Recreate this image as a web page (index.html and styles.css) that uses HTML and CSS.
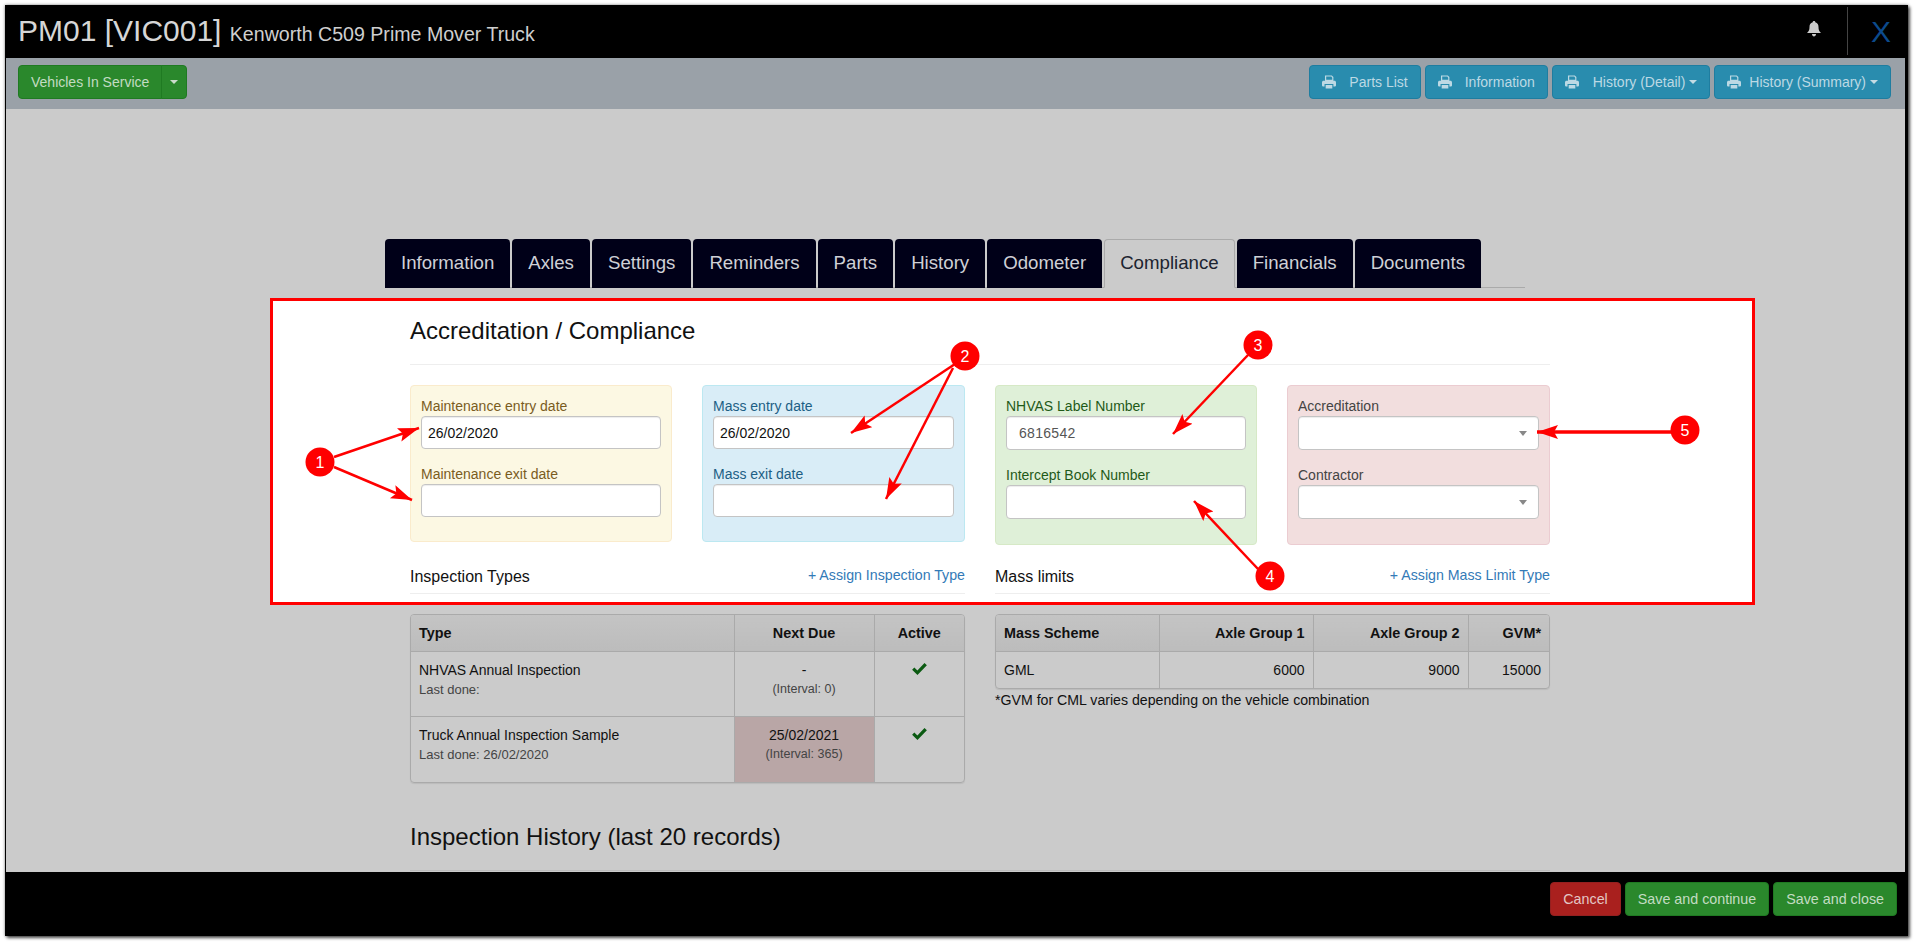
FILE: index.html
```html
<!DOCTYPE html>
<html lang="en">
<head>
<meta charset="utf-8">
<title>PM01 Compliance</title>
<link rel="stylesheet" href="styles.css">
</head>
<body>
<svg class="defs" width="0" height="0" aria-hidden="true">
  <defs>
    <symbol id="printer" viewBox="0 0 16 15">
      <path d="M3.4 0h7.800l1.800 1.800V6H3.400zM4.800 1.300v3.500h6.900V2.600l-1.100-1.300zM0 8c0-1 .8-1.800 1.800-1.800h12.400c1 0 1.800.8 1.800 1.800v3.600c0 .5-.4.9-.9.900h-2.100V9.800H2.900v2.700H.9c-.5 0-.9-.4-.9-.9zM4.200 11h7.600v4H4.200z"/>
    </symbol>
    <symbol id="check" viewBox="0 0 16 13">
      <path d="M0 7.200 2.400 4.800 5.700 8 13.400 0 16 2.500 5.800 13z"/>
    </symbol>
    <marker id="head" markerUnits="userSpaceOnUse" markerWidth="24" markerHeight="16" refX="21" refY="7" orient="auto">
      <path d="M0 0 21 7 0 14 4 7z" fill="#f00"/>
    </marker>
  </defs>
</svg>
<div class="window">
  <header class="topbar">
    <h1 class="title">PM01 [VIC001] <small class="subtitle">Kenworth C509 Prime Mover Truck</small></h1>
    <div class="top-actions">
      <svg class="bell" viewBox="0 0 14 16"><path d="M7 0c.8 0 1.300.5 1.300 1.200C10.600 1.800 11.500 3.600 11.500 6c0 3 .7 4.400 2.500 6H0c1.800-1.600 2.500-3 2.500-6 0-2.400.9-4.200 3.200-4.800C5.700.5 6.200 0 7 0zM5 13h4c0 1.500-.9 2.500-2 2.500S5 14.500 5 13z"/></svg>
      <span class="divider"></span>
      <span class="close">X</span>
    </div>
  </header>
  <div class="toolbar">
    <div class="split">
      <button class="btn green split-main">Vehicles In Service</button>
      <button class="btn green split-caret"><span class="caret"></span></button>
    </div>
    <div class="reports">
      <button class="btn teal"><svg class="print"><use href="#printer"/></svg>Parts List</button>
      <button class="btn teal"><svg class="print"><use href="#printer"/></svg>Information</button>
      <button class="btn teal"><svg class="print mid"><use href="#printer"/></svg>History (Detail)<span class="caret after"></span></button>
      <button class="btn teal"><svg class="print near"><use href="#printer"/></svg>History (Summary)<span class="caret after"></span></button>
    </div>
  </div>
  <main class="content">
    <nav class="tabs">
      <a class="tab">Information</a>
      <a class="tab">Axles</a>
      <a class="tab">Settings</a>
      <a class="tab">Reminders</a>
      <a class="tab">Parts</a>
      <a class="tab">History</a>
      <a class="tab">Odometer</a>
      <a class="tab active">Compliance</a>
      <a class="tab">Financials</a>
      <a class="tab">Documents</a>
    </nav>
    <section class="highlight">
      <h2 class="section-head">Accreditation / Compliance</h2>
      <div class="panels">
        <div class="panel yellow">
          <label class="field">Maintenance entry date<input class="input" value="26/02/2020" readonly></label>
          <label class="field">Maintenance exit date<input class="input" readonly></label>
        </div>
        <div class="panel blue">
          <label class="field">Mass entry date<input class="input" value="26/02/2020" readonly></label>
          <label class="field">Mass exit date<input class="input" readonly></label>
        </div>
        <div class="panel lime tall">
          <label class="field">NHVAS Label Number<input class="input number" value="6816542" readonly></label>
          <label class="field">Intercept Book Number<input class="input" readonly></label>
        </div>
        <div class="panel rose tall">
          <div class="field">Accreditation<div class="input select"><span class="select-arrow"></span></div></div>
          <div class="field">Contractor<div class="input select"><span class="select-arrow"></span></div></div>
        </div>
      </div>
      <div class="split-row">
        <div class="subhead"><h3 class="subhead-title">Inspection Types</h3><a class="assign">+ Assign Inspection Type</a></div>
        <div class="subhead"><h3 class="subhead-title">Mass limits</h3><a class="assign">+ Assign Mass Limit Type</a></div>
      </div>
    </section>
    <div class="lower">
      <div class="split-row">
        <div>
          <div class="table-wrap">
            <table class="grid inspections">
              <thead><tr><th>Type</th><th class="center">Next Due</th><th class="center">Active</th></tr></thead>
              <tbody>
                <tr class="row-a">
                  <td>NHVAS Annual Inspection<div class="done">Last done:</div></td>
                  <td class="center">-<div class="interval">(Interval: 0)</div></td>
                  <td class="center"><svg class="tick"><use href="#check"/></svg></td>
                </tr>
                <tr class="row-b">
                  <td>Truck Annual Inspection Sample<div class="done">Last done: 26/02/2020</div></td>
                  <td class="center overdue">25/02/2021<div class="interval">(Interval: 365)</div></td>
                  <td class="center"><svg class="tick"><use href="#check"/></svg></td>
                </tr>
              </tbody>
            </table>
          </div>
        </div>
        <div>
          <div class="table-wrap">
            <table class="grid mass">
              <thead><tr><th>Mass Scheme</th><th class="right">Axle Group 1</th><th class="right">Axle Group 2</th><th class="right">GVM*</th></tr></thead>
              <tbody>
                <tr class="row-c"><td>GML</td><td class="right">6000</td><td class="right">9000</td><td class="right">15000</td></tr>
              </tbody>
            </table>
          </div>
          <p class="note">*GVM for CML varies depending on the vehicle combination</p>
        </div>
      </div>
      <h2 class="section-head history">Inspection History (last 20 records)</h2>
    </div>
  </main>
  <footer class="footer">
    <button class="btn red">Cancel</button>
    <button class="btn green">Save and continue</button>
    <button class="btn green">Save and close</button>
  </footer>
  <svg class="annotations" viewBox="6 5 1898 931">
    <g class="arrows">
      <line x1="334" y1="457" x2="419" y2="428" marker-end="url(#head)"/>
      <line x1="334" y1="467" x2="412" y2="500" marker-end="url(#head)"/>
      <line x1="955" y1="364" x2="851" y2="433" marker-end="url(#head)"/>
      <line x1="953" y1="368" x2="886" y2="499" marker-end="url(#head)"/>
      <line x1="1248" y1="355" x2="1173" y2="434" marker-end="url(#head)"/>
      <line x1="1258" y1="569" x2="1194" y2="501" marker-end="url(#head)"/>
      <line class="thick" x1="1672" y1="432" x2="1537" y2="432" marker-end="url(#head)"/>
    </g>
    <g class="callouts">
      <circle cx="320" cy="462" r="14.500"/><text x="320" y="468">1</text>
      <circle cx="965" cy="356" r="14.500"/><text x="965" y="362">2</text>
      <circle cx="1258" cy="345" r="14.500"/><text x="1258" y="351">3</text>
      <circle cx="1270" cy="576" r="14.500"/><text x="1270" y="582">4</text>
      <circle cx="1685" cy="430" r="14.500"/><text x="1685" y="436">5</text>
    </g>
  </svg>
</div>
</body>
</html>
```
FILE: styles.css
```css
* { box-sizing: border-box; }
html, body { height: 100%; }
body {
  margin: 0;
  background: #fff;
  overflow: hidden;
  font-family: "Liberation Sans", Arial, sans-serif;
  font-size: 14px;
  line-height: 20px;
  color: #111;
}
.defs { position: absolute; }
.window {
  position: relative;
  margin: 5px;
  width: 1903px;
  height: 931px;
  display: flex;
  flex-direction: column;
  background: #cbcbcb;
  border-left: 1px solid #000;
  border-right: 3px solid #000;
  box-shadow: 2px 2px 3px rgba(0,0,0,.65), 0 0 3px rgba(0,0,0,.45);
}
.topbar {
  flex: 0 0 53px;
  display: flex;
  justify-content: space-between;
  background: #000;
  padding: 0 14px 0 12px;
}
.title {
  margin: 9px 0 0;
  font-size: 30px;
  line-height: 33px;
  font-weight: 400;
  color: #d6d6d6;
}
.subtitle { font-size: 19.6px; color: #cfcfcf; }
.top-actions { display: flex; align-items: flex-start; }
.bell { width: 14px; height: 16px; fill: #ccc; margin-top: 16px; }
.divider { width: 1px; height: 48px; background: #444; margin: 2px 23px 0 26px; }
.close { font-size: 30px; line-height: 33px; margin-top: 10px; color: #0c4a8c; }
.toolbar {
  flex: 0 0 51px;
  display: flex;
  justify-content: space-between;
  align-items: flex-start;
  background: #9aa1a8;
  padding: 7px 14px 0 12px;
}
.btn {
  height: 34px;
  padding: 0 12px;
  border: 1px solid transparent;
  border-radius: 4px;
  font: 14px/20px "Liberation Sans", Arial, sans-serif;
  display: inline-flex;
  align-items: center;
}
.green { background: #2a882c; border-color: #1f7a22; color: #c3dcc3; }
.red { background: #a9201e; border-color: #952020; color: #e3c6c5; }
.teal { background: #298cae; border-color: #1f7da0; color: #bcd9e4; }
.split { display: flex; }
.split-main { border-radius: 4px 0 0 4px; }
.split-caret { width: 26px; justify-content: center; padding: 0; margin-left: -1px; border-radius: 0 4px 4px 0; }
.caret {
  width: 0;
  height: 0;
  border-top: 4px solid #cbdccb;
  border-left: 4px solid transparent;
  border-right: 4px solid transparent;
}
.after { margin-left: 4px; border-top-color: #c4dbe4; }
.reports { display: flex; gap: 4px; }
.print { width: 14px; height: 14px; fill: #bcd9e4; margin-right: 13px; }
.print.mid { margin-right: 14px; }
.print.near { margin-right: 8px; }
.content {
  flex: 1;
  min-height: 0;
  overflow: hidden;
  padding-top: 130px;
  background: #cbcbcb;
}
.tabs {
  display: flex;
  gap: 2px;
  width: 1140px;
  height: 49px;
  margin-left: 379px;
  border-bottom: 1px solid #aaa;
}
.tab {
  height: 49px;
  padding: 13px 16px 0;
  background: #000018;
  border-radius: 4px 4px 0 0;
  color: #cfd0d6;
  font-size: 18.67px;
  line-height: 22px;
}
.tab.active {
  background: #cbcbcb;
  border: 1px solid #aaa;
  border-bottom-color: #cbcbcb;
  padding: 12px 15px 0;
  color: #1c2430;
}
.highlight {
  width: 1485px;
  height: 307px;
  margin: 10px 0 0 264px;
  border: 3px solid #f00;
  background: #fff;
  padding: 16px 202px 0 137px;
}
.section-head {
  margin: 0;
  padding-bottom: 19px;
  border-bottom: 1px solid #eee;
  font-size: 24px;
  line-height: 28px;
  font-weight: 400;
  color: #111;
}
.panels {
  display: grid;
  grid-template-columns: 262px 263px 262px 263px;
  gap: 30px;
  align-items: start;
  margin-top: 20px;
}
.panel {
  border: 1px solid;
  border-radius: 4px;
  padding: 10px 10px 9px;
}
.panel.tall { padding-bottom: 10px; }
.yellow { background: #fcf8e3; border-color: #faebcc; color: #7a5c1e; }
.blue { background: #d9edf7; border-color: #bce8f1; color: #1d5f85; }
.lime { background: #dff0d8; border-color: #d6e9c6; color: #1f5a18; }
.rose { background: #f2dede; border-color: #ebccd1; color: #444; }
.field { display: block; margin-bottom: 15px; font-weight: 400; }
.input {
  display: block;
  width: 100%;
  height: 33px;
  padding: 0 6px;
  border: 1px solid #c4c4c4;
  border-radius: 4px;
  background: #fff;
  box-shadow: inset 0 1px 1px rgba(0,0,0,.075);
  font: 14px/20px "Liberation Sans", Arial, sans-serif;
  color: #111;
  outline: none;
}
.tall .input { height: 34px; }
.number { padding-left: 12px; color: #555; letter-spacing: .3px; }
.select { display: flex; align-items: center; justify-content: flex-end; padding-right: 11px; }
.select-arrow {
  border-top: 5px solid #888;
  border-left: 4px solid transparent;
  border-right: 4px solid transparent;
}
.split-row {
  display: grid;
  grid-template-columns: 555px 555px;
  gap: 30px;
}
.highlight .split-row { margin-top: 20px; }
.subhead {
  display: flex;
  justify-content: space-between;
  align-items: flex-start;
  height: 29px;
  border-bottom: 1px solid #eee;
}
.subhead-title { margin: 1px 0 0; font-size: 16px; line-height: 22px; font-weight: 400; }
.assign { color: #337ab7; line-height: 20px; font-size: 14.2px; }
.lower { margin: 9px 0 0 404px; width: 1140px; }
.table-wrap {
  border: 1px solid #aaa;
  border-radius: 4px;
  overflow: hidden;
  box-shadow: 0 1px 1px rgba(0,0,0,.08);
}
.grid {
  width: 100%;
  border-collapse: collapse;
  table-layout: fixed;
  font-size: 14px;
}
.grid th, .grid td {
  border: 1px solid #aaa;
  padding: 8px;
  vertical-align: top;
  text-align: left;
  font-weight: 400;
  color: #111;
}
.grid tr > :first-child { border-left: 0; }
.grid tr > :last-child { border-right: 0; }
.grid thead th { border-top: 0; font-size: 14.4px; font-weight: 700; height: 36px; background: linear-gradient(#c4c4c4, #bcbcbc); }
.grid tbody tr:last-child td { border-bottom: 0; }
.grid .center { text-align: center; }
.grid .right { text-align: right; }
.inspections th:nth-child(1) { width: 323px; }
.inspections th:nth-child(2) { width: 140px; }
.mass th:nth-child(1) { width: 163px; }
.mass th:nth-child(2) { width: 154px; }
.mass th:nth-child(3) { width: 155px; }
.row-a { height: 65px; }
.row-b { height: 65px; }
.row-c { height: 36px; }
.done { font-size: 13px; color: #444; }
.interval { font-size: 12.5px; color: #444; line-height: 18px; }
.grid .overdue { background: #b9a6a6; }
.tick { width: 15px; height: 12px; fill: #0b5a12; margin-top: 3px; }
.note { margin: 1px 0 0; font-size: 14.15px; }
.history { margin-top: 40px; padding-bottom: 19px; border-bottom-color: #bbb; }
.footer {
  flex: 0 0 64px;
  display: flex;
  justify-content: flex-end;
  gap: 4px;
  padding: 10px 8px 0 0;
  background: #000;
}
.footer .btn { font-size: 14.3px; }
.annotations {
  position: absolute;
  left: 0;
  top: 0;
  width: 1898px;
  height: 931px;
  pointer-events: none;
}
.arrows line { stroke: #f00; stroke-width: 2.5; }
.arrows .thick { stroke-width: 3.5; }
.callouts circle { fill: #f00; }
.callouts text {
  fill: #fff;
  font: 16px "Liberation Sans", Arial, sans-serif;
  text-anchor: middle;
}
```
